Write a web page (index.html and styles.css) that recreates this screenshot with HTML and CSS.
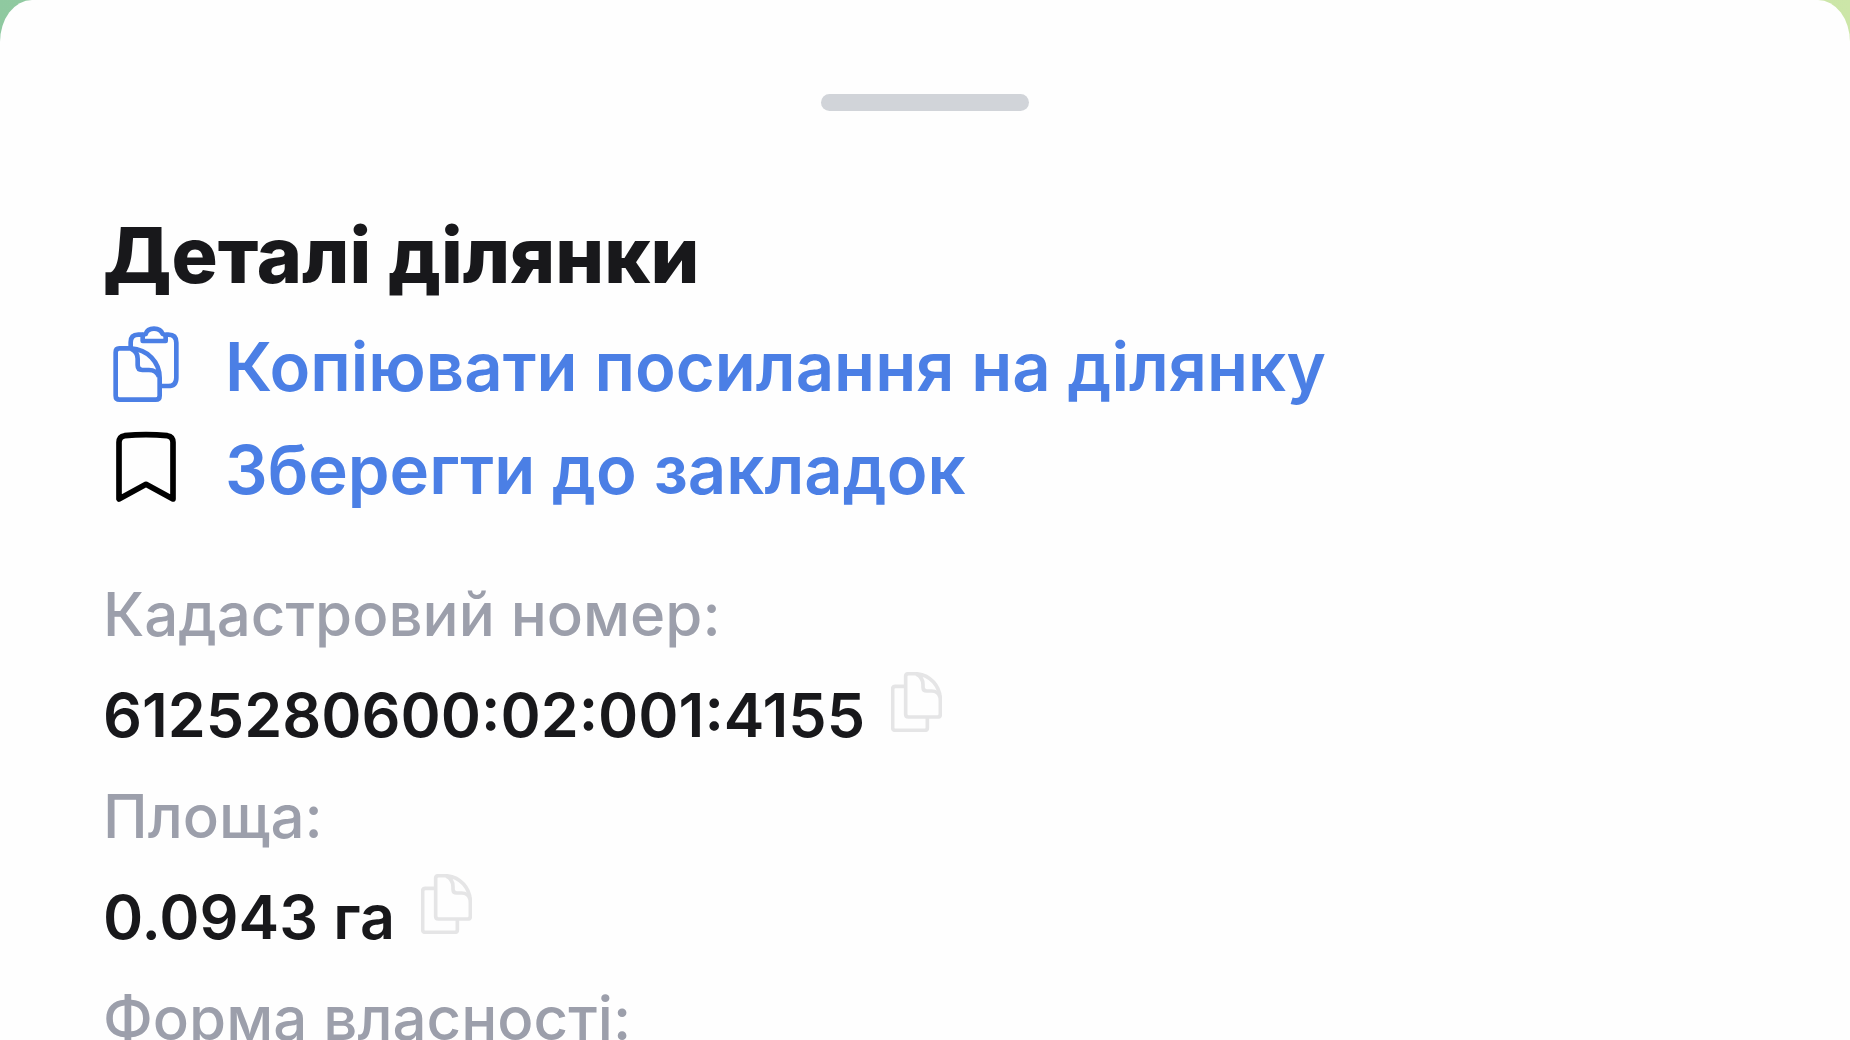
FILE: index.html
```html
<!DOCTYPE html>
<html lang="uk">
<head>
  <meta charset="UTF-8">
  <meta name="viewport" content="width=device-width, initial-scale=1">
  <title>Деталі ділянки</title>
  <link rel="stylesheet" href="styles.css">
</head>
<body>
  <svg class="sprite" aria-hidden="true">
    <symbol id="icon-copy" viewBox="0 0 153 180">
      <path d="M44 43H13q-8 0-8 8V167q0 8 8 8H101q8 0 8-8V136"/>
      <path d="M53 5H74C118 8 148 42 148 86V127q0 8-8 8H52q-8 0-8-8V13q0-8 9-8z"/>
      <path d="M76 6Q96 16 96 38V46q0 11 11 11H122Q142 57 147 76"/>
    </symbol>
  </svg>

  <main class="sheet">
    <div class="handle"></div>

    <h1>Деталі ділянки</h1>

    <div class="actions">
      <a href="#copy" class="action">
        <svg class="action-icon" viewBox="0 0 198 228">
          <path d="M53 66V49Q53 26 76 26H90M158 26H166Q190 26 190 50V155Q190 180 166 180H142"/>
          <path d="M89 45V33q0-8 9-9Q103 8 123 8T149 24q9 1 9 9V45z"/>
          <path d="M19 67H53C104 70 140 108 140 156V209q0 12-12 12H20q-12 0-12-12V79q0-12 11-12z"/>
          <path d="M54 68Q74 78 74 98V118q0 14 14 14H108Q130 132 138 152"/>
        </svg>
        Копіювати посилання на ділянку
      </a>
      <a href="#save" class="action">
        <svg class="action-icon bookmark" viewBox="0 0 198 228">
          <path d="M18 210V40Q18 23 35 20Q99 14 163 20Q180 23 180 40V210L99 166z"/>
        </svg>
        Зберегти до закладок
      </a>
    </div>

    <dl class="details">
      <dt>Кадастровий номер:</dt>
      <dd>6125280600:02:001:4155
        <button class="copy" aria-label="Копіювати"><svg><use href="#icon-copy"/></svg></button>
      </dd>
      <dt>Площа:</dt>
      <dd>0.0943 га
        <button class="copy" aria-label="Копіювати"><svg><use href="#icon-copy"/></svg></button>
      </dd>
      <dt>Форма власності:</dt>
    </dl>
  </main>
</body>
</html>
```
FILE: styles.css
```css
* {
  box-sizing: border-box;
}

body {
  margin: 0;
  height: 100vh;
  overflow: hidden;
  background: linear-gradient(90deg, #8fc9a0, #cce6a8);
  color: #18181b;
  font-family: Inter, sans-serif;
}

.sprite {
  display: none;
}

.sheet {
  min-height: 100vh;
  padding: 94px 103px 0;
  background: #fefefe;
  border-radius: 32px 32px 0 0 / 42px 42px 0 0;
}

.handle {
  width: 208px;
  height: 17px;
  margin: 0 auto;
  border-radius: 9px;
  background: #d1d4d9;
}

h1 {
  margin: 94px 0 0;
  font-size: 77px;
  font-weight: 800;
  line-height: 100px;
}

.actions {
  display: flex;
  flex-direction: column;
  align-items: flex-start;
  margin-top: 10px;
}

.action {
  display: flex;
  align-items: center;
  gap: 46px;
  height: 103px;
  color: #4b7fe5;
  font-size: 67px;
  font-weight: 600;
  text-decoration: none;
}

.action-icon {
  width: 66px;
  height: 76px;
  margin: 0 0 6px 10px;
  fill: none;
  stroke: currentColor;
  stroke-width: 14;
  stroke-linejoin: round;
}

.bookmark {
  color: #000;
  stroke-width: 17;
}

.details {
  margin: 43px 0 0;
  font-size: 60px;
  font-weight: 500;
  line-height: 101px;
}

dt {
  color: #9c9fab;
}

dd {
  display: flex;
  align-items: center;
  gap: 26px;
  margin: 0;
  font-size: 61px;
  font-weight: 600;
}

.copy {
  margin-bottom: 28px;
  padding: 0;
  border: none;
  background: none;
  cursor: pointer;
}

.copy svg {
  display: block;
  width: 51px;
  height: 60px;
  fill: none;
  stroke: #e5e5e6;
  stroke-width: 11;
}
```
